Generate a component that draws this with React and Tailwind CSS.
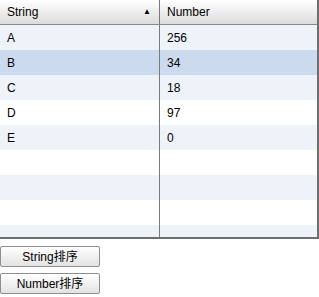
import React from 'react';

const rows = [
    { s: 'A', n: '256' },
    { s: 'B', n: '34' },
    { s: 'C', n: '18' },
    { s: 'D', n: '97' },
    { s: 'E', n: '0' },
    { s: '', n: '' },
    { s: '', n: '' },
    { s: '', n: '' },
    { s: '', n: '' },
];

const App = () => {
    return (
        <div className="w-[319px] h-[297px] bg-white text-[12px] text-black" style={{ fontFamily: '"Liberation Sans", "Noto Sans CJK SC", sans-serif' }}>
            <div className="w-[319px] border-r-2 border-b-2 border-[#6e6e6e] overflow-hidden">
                <div className="flex h-[25px] bg-gradient-to-b from-white to-[#dcdcdc] border-b border-[#8a8a8a]">
                    <div className="w-[160px] flex items-center justify-between pl-[7px] pr-[8px] border-r border-[#7a7a7a]">
                        <span>String</span>
                        <span className="text-[8px] leading-none">▲</span>
                    </div>
                    <div className="flex-1 flex items-center pl-[7px]">Number</div>
                </div>
                <div className="h-[212px] overflow-hidden">
                    {rows.map((r, i) => (
                        <div
                            key={i}
                            className={`flex h-[25px] ${i === 1 ? 'bg-[#ccdaee]' : i % 2 === 0 ? 'bg-[#eef3fa]' : 'bg-white'}`}
                        >
                            <div className="w-[160px] flex items-center pl-[7px] border-r border-[#7a7a7a]">{r.s}</div>
                            <div className="flex-1 flex items-center pl-[7px]">{r.n}</div>
                        </div>
                    ))}
                </div>
            </div>
            <div className="flex flex-col gap-[6px] mt-[7px]">
                <button className="w-[100px] h-[21px] border border-[#8f8f8f] rounded-[2px] bg-gradient-to-b from-white to-[#e3e3e3] text-[12px] leading-none">String排序</button>
                <button className="w-[100px] h-[21px] border border-[#8f8f8f] rounded-[2px] bg-gradient-to-b from-white to-[#e3e3e3] text-[12px] leading-none">Number排序</button>
            </div>
        </div>
    );
};

export default App;
